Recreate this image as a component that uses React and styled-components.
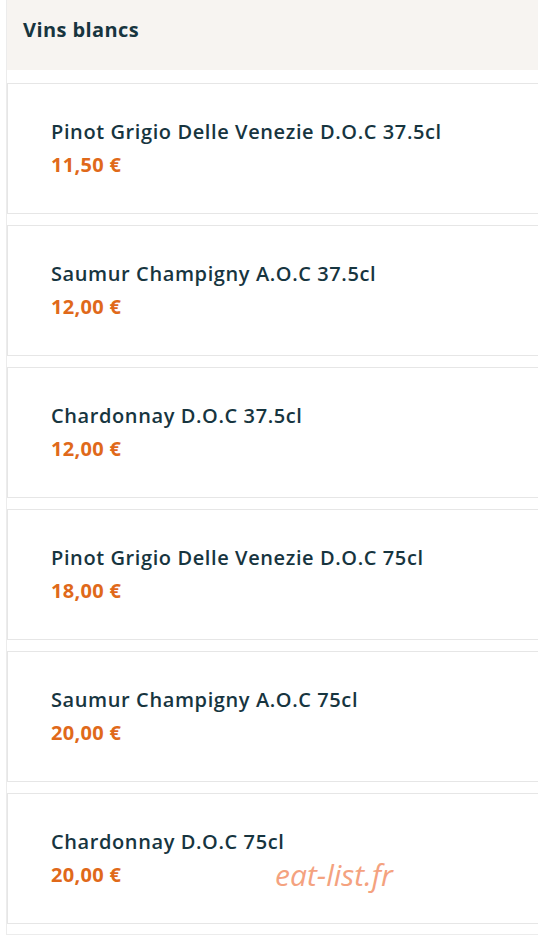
import React from 'react'
import styled, { createGlobalStyle } from 'styled-components'

const GlobalStyle = createGlobalStyle`
  html, body {
    margin: 0;
    padding: 0;
    background: #ffffff;
  }
  body {
    font-family: 'Open Sans', 'Noto Sans', sans-serif;
    overflow: hidden;
  }
`

const Page = styled.div`
  width: 538px;
  height: 947px;
  overflow: hidden;
  background: #ffffff;
`

const Section = styled.section`
  margin-left: 6px;
  border-left: 1px solid #ececec;
  border-bottom: 1px solid #ececec;
  padding-bottom: 10px;
`

const Header = styled.div`
  height: 70px;
  background: #f7f4f1;
  display: flex;
  align-items: center;
  padding-left: 16px;
  margin-bottom: 13px;
`

const Title = styled.h2`
  margin: 0;
  padding-bottom: 12px;
  font-size: 20px;
  font-weight: 700;
  letter-spacing: 0.4px;
  color: #17353f;
`

const List = styled.div`
  display: flex;
  flex-direction: column;
  gap: 11px;
`

const Card = styled.div`
  position: relative;
  height: 131px;
  box-sizing: border-box;
  margin-right: -10px;
  border: 1px solid #e6e6e6;
  padding: 33px 0 0 43px;
  background: #ffffff;
`

const Name = styled.div`
  font-size: 20px;
  font-weight: 600;
  line-height: 30px;
  letter-spacing: 0.6px;
  color: #17353f;
`

const Price = styled.div`
  margin-top: 3px;
  font-size: 20px;
  font-weight: 700;
  line-height: 30px;
  letter-spacing: 0.3px;
  color: #e0691a;
`

const Watermark = styled.span`
  position: absolute;
  left: 267px;
  top: 60px;
  font-family: 'Open Sans', sans-serif;
  font-style: italic;
  font-size: 30px;
  color: #f4a27f;
`

const wines = [
  { name: 'Pinot Grigio Delle Venezie D.O.C 37.5cl', price: '11,50 €' },
  { name: 'Saumur Champigny A.O.C 37.5cl', price: '12,00 €' },
  { name: 'Chardonnay D.O.C 37.5cl', price: '12,00 €' },
  { name: 'Pinot Grigio Delle Venezie D.O.C 75cl', price: '18,00 €' },
  { name: 'Saumur Champigny A.O.C 75cl', price: '20,00 €' },
  { name: 'Chardonnay D.O.C 75cl', price: '20,00 €' },
]

export default function App() {
  return (
    <Page>
      <GlobalStyle />
      <Section>
        <Header>
          <Title>Vins blancs</Title>
        </Header>
        <List>
          {wines.map((w, i) => (
            <Card key={i}>
              <Name>{w.name}</Name>
              <Price>{w.price}</Price>
              {i === wines.length - 1 && <Watermark>eat-list.fr</Watermark>}
            </Card>
          ))}
        </List>
      </Section>
    </Page>
  )
}
